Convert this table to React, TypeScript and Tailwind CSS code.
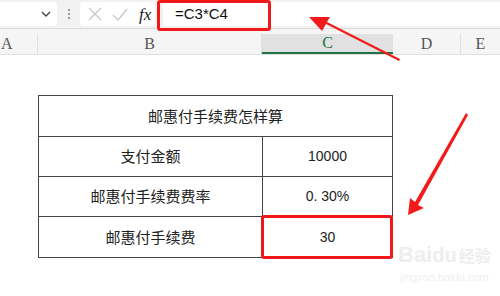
import React from "react";

const cjk = { fontFamily: '"Noto Sans CJK SC", "Noto Sans", sans-serif' };
const num = { fontFamily: '"Liberation Sans", Arial, sans-serif' };
const serif = { fontFamily: '"Liberation Serif", "DejaVu Serif", serif' };

export default function App() {
  return (
    <div className="relative w-[500px] h-[296px] overflow-hidden bg-white">
      {/* toolbar */}
      <div className="flex h-[29px] items-center bg-[#f2f2f2] border-b border-[#dadada] pl-0">
        <div className="flex h-[24px] w-[57px] items-center justify-end rounded-r-[4px] bg-white pr-[6px]">
          <svg width="10" height="6" viewBox="0 0 10 6">
            <path d="M1 1 L5 5 L9 1" stroke="#444" strokeWidth="1.4" fill="none" />
          </svg>
        </div>
        <div className="flex w-[23px] flex-col items-center justify-center gap-[2px]">
          <div className="h-[2px] w-[2px] bg-[#999]" />
          <div className="h-[2px] w-[2px] bg-[#999]" />
          <div className="h-[2px] w-[2px] bg-[#999]" />
        </div>
        <div className="flex h-[24px] w-[75px] items-center rounded-[4px] bg-white pl-[8px]">
          <svg width="14" height="14" viewBox="0 0 14 14">
            <path d="M1 1 L13 13 M13 1 L1 13" stroke="#c8c8c8" strokeWidth="1.3" />
          </svg>
          <svg className="ml-[10px]" width="16" height="13" viewBox="0 0 16 13">
            <path d="M1 7 L6 12 L15 1" stroke="#c8c8c8" strokeWidth="1.3" fill="none" />
          </svg>
          <span className="ml-[11px] text-[17px] italic leading-none text-[#222]" style={serif}>
            fx
          </span>
        </div>
        <div className="ml-[8px] flex h-[24px] flex-1 items-center rounded-l-[4px] bg-white pl-[12px]">
          <span className="text-[15px] text-[#111]" style={num}>=C3*C4</span>
        </div>
      </div>

      {/* column headers */}
      <div className="flex h-[26px] items-stretch bg-[#f5f5f5] pt-[5px] border-b border-[#e0e0e0] text-[16px] text-[#555]" style={serif}>
        <div className="flex w-[38px] items-center border-r border-[#e0e0e0] pl-[1px]">A</div>
        <div className="flex w-[224px] items-center justify-center border-r border-[#e0e0e0]">B</div>
        <div className="flex w-[131px] items-center justify-center border-b-2 border-[#217346] bg-[#e1e1e1] text-[#217346]">C</div>
        <div className="flex w-[68px] items-center justify-center border-r border-[#e0e0e0]">D</div>
        <div className="flex flex-1 items-center justify-center">E</div>
      </div>

      {/* table */}
      <div className="pl-[38px] pt-[40px]">
        <div className="w-[355px] border border-[#444] text-[15px] text-[#222]">
          <div className="flex h-[41px] items-center justify-center border-b border-[#444]" style={cjk}>
            邮惠付手续费怎样算
          </div>
          {[
            ["支付金额", "10000"],
            ["邮惠付手续费费率", "0. 30%"],
            ["邮惠付手续费", "30"],
          ].map(([a, b], i) => (
            <div key={i} className={`flex h-[40px] ${i < 2 ? "border-b border-[#444]" : ""}`}>
              <div className="flex w-[224px] items-center justify-center border-r border-[#444]" style={cjk}>
                {a}
              </div>
              <div className="flex flex-1 items-center justify-center text-[14px]" style={num}>
                {b}
              </div>
            </div>
          ))}
        </div>
      </div>

      {/* red highlight boxes */}
      <div className="absolute left-[157px] top-[0px] h-[31px] w-[114px] rounded-[3px] border-[3px] border-[#f01818]" />
      <div className="absolute left-[261px] top-[215px] h-[44px] w-[132px] rounded-[3px] border-[3px] border-[#f01818]" />

      {/* arrows */}
      <svg className="absolute left-0 top-0" width="500" height="296" viewBox="0 0 500 296">
        <polygon points="399,61 326,24 322,31 309,17 330,17 327,22 400,59" fill="#f21a1a" />
        <polygon points="466,113 468,115 418,205 424,208 408,215 410,198 415,202" fill="#f21a1a" />
      </svg>

      {/* watermark */}
      <div className="absolute left-[398px] top-[244px] text-[22px] font-bold leading-none text-[#eeeeee]" style={num}>
        Bai<span className="text-[20px]">du</span><span className="ml-[2px] text-[16px]" style={cjk}>经验</span>
      </div>
      <div className="absolute left-[400px] top-[272px] text-[11px] leading-none text-[#efefef]" style={num}>
        jingyan.baidu.com
      </div>
    </div>
  );
}
